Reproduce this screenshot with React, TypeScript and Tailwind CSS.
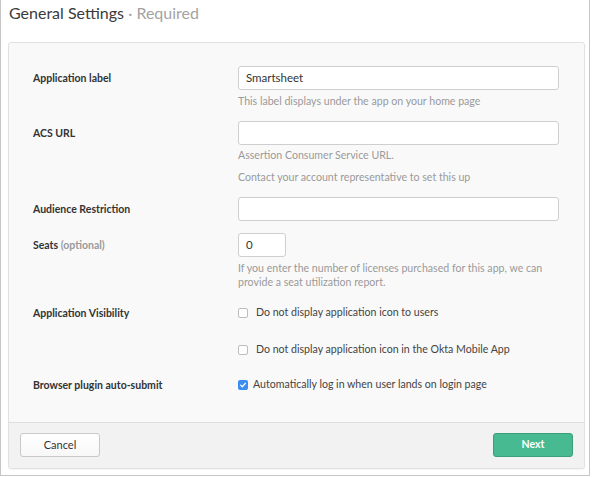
import React from "react";

const font = { fontFamily: '"Lato", "Liberation Sans", sans-serif' };

function Checkbox({ checked = false }: { checked?: boolean }) {
  if (checked) {
    return (
      <span className="flex h-[10px] w-[10px] shrink-0 items-center justify-center rounded-[2px] bg-[#3b8ef0]">
        <svg viewBox="0 0 10 10" className="h-[8px] w-[8px]">
          <path d="M2 5.2 L4.1 7.2 L8 2.8" fill="none" stroke="#fff" strokeWidth="1.5" strokeLinecap="round" strokeLinejoin="round" />
        </svg>
      </span>
    );
  }
  return <span className="h-[10px] w-[10px] shrink-0 rounded-[2px] border border-[#bdbdbd] bg-white" />;
}

function Label({ children }: { children: React.ReactNode }) {
  return (
    <div className="w-[205px] shrink-0 text-[10.5px] font-bold leading-[24px] text-[#333]">{children}</div>
  );
}

function Help({ children, className = "" }: { children: React.ReactNode; className?: string }) {
  return <p className={`text-[10.6px] leading-[14px] text-[#9a9a9a] ${className}`}>{children}</p>;
}

export default function App() {
  return (
    <div style={font} className="h-[476px] w-[590px] border-x border-b border-[#c6c6c6] bg-white">
      {/* Title */}
      <h1 className="px-[8px] pt-[3px] text-[16px] leading-[20px] text-[#3a3a3a]">
        General Settings <span className="text-[#a3a3a3]">· Required</span>
      </h1>

      {/* Panel */}
      <div className="ml-[7px] mt-[19px] w-[577px] rounded-[3px] border border-[#e1e1e1] bg-[#f9f9f9] shadow-[0_1px_1px_rgba(0,0,0,0.04)]">
        <div className="pb-[25px] pl-[24px] pr-[25px] pt-[23px]">
          {/* Application label */}
          <div className="flex">
            <Label>Application label</Label>
            <div className="flex-1">
              <div className="flex h-[24px] items-center rounded-[3px] border border-[#cfcfcf] bg-white px-[7px] text-[11.5px] text-[#333]">
                Smartsheet
              </div>
              <Help className="mt-[4px]">This label displays under the app on your home page</Help>
            </div>
          </div>

          {/* ACS URL */}
          <div className="mt-[13px] flex">
            <Label>ACS URL</Label>
            <div className="flex-1">
              <div className="h-[24px] rounded-[3px] border border-[#cfcfcf] bg-white" />
              <Help className="mt-[3px]">Assertion Consumer Service URL.</Help>
              <Help className="mt-[8px]">Contact your account representative to set this up</Help>
            </div>
          </div>

          {/* Audience Restriction */}
          <div className="mt-[13px] flex">
            <Label>Audience Restriction</Label>
            <div className="flex-1">
              <div className="h-[24px] rounded-[3px] border border-[#cfcfcf] bg-white" />
            </div>
          </div>

          {/* Seats */}
          <div className="mt-[12px] flex">
            <Label>
              Seats <span className="text-[#9a9a9a]">(optional)</span>
            </Label>
            <div className="flex-1">
              <div className="flex h-[24px] w-[48px] items-center rounded-[3px] border border-[#cfcfcf] bg-white px-[7px] text-[11.5px] text-[#333]">
                0
              </div>
              <Help className="mt-[4px]">
                If you enter the number of licenses purchased for this app, we can
                <br />
                provide a seat utilization report.
              </Help>
            </div>
          </div>

          {/* Application Visibility */}
          <div className="mt-[12px] flex">
            <Label>Application Visibility</Label>
            <div className="flex-1">
              <div className="flex h-[24px] items-center gap-[8px] text-[10.6px] text-[#444]">
                <Checkbox />
                <span>Do not display application icon to users</span>
              </div>
              <div className="mt-[13px] flex h-[24px] items-center gap-[8px] text-[10.6px] text-[#444]">
                <Checkbox />
                <span>Do not display application icon in the Okta Mobile App</span>
              </div>
            </div>
          </div>

          {/* Browser plugin auto-submit */}
          <div className="mt-[11px] flex">
            <Label>Browser plugin auto-submit</Label>
            <div className="flex h-[24px] flex-1 items-center gap-[5px] text-[10.6px] text-[#444]">
              <Checkbox checked />
              <span>Automatically log in when user lands on login page</span>
            </div>
          </div>
        </div>

        {/* Footer */}
        <div className="flex items-center justify-between rounded-b-[3px] border-t border-[#dedede] bg-[#f2f2f2] px-[11px] pb-[11px] pt-[10px]">
          <button className="h-[24px] w-[80px] rounded-[3px] border border-[#c9c9c9] bg-gradient-to-b from-white to-[#f7f7f7] text-[11px] text-[#333]">
            Cancel
          </button>
          <button className="h-[24px] w-[80px] rounded-[3px] border border-[#3a9f7b] bg-[#48ba92] text-[10.5px] font-bold text-white">
            Next
          </button>
        </div>
      </div>
    </div>
  );
}
